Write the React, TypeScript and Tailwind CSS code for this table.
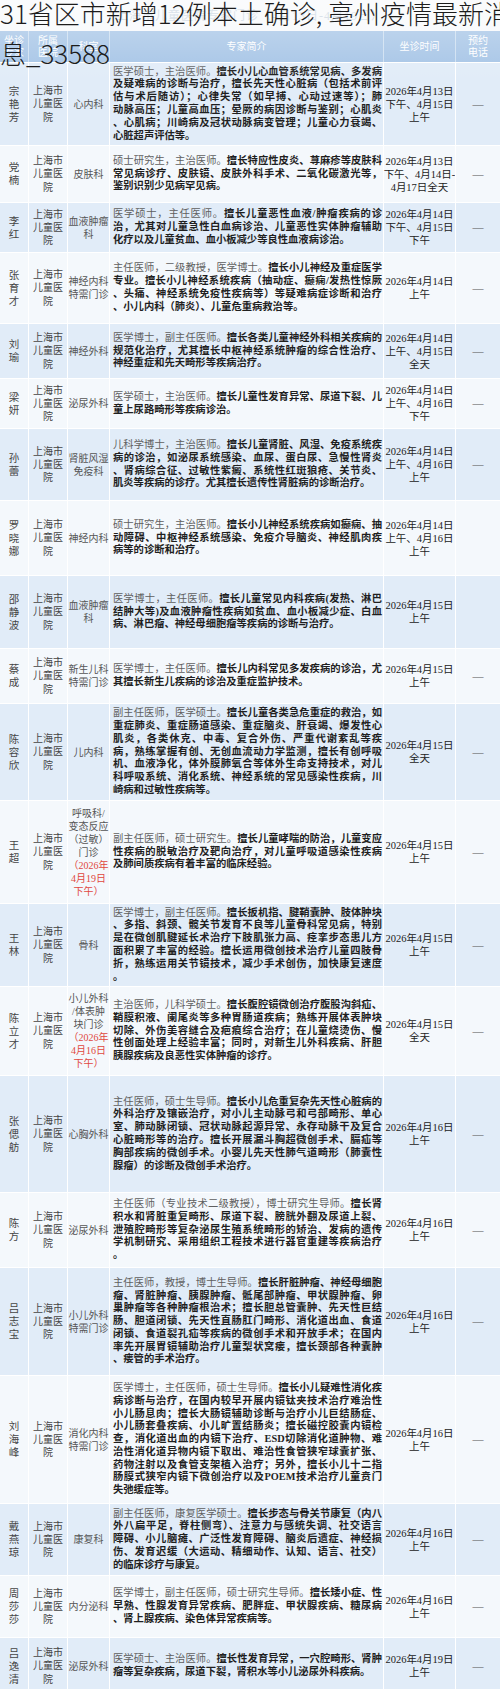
import React from 'react';

type Row = {
  name: string;
  dept: string[];
  red?: string[];
  intro: string[];
  plain: number;
  time: string[];
  phone: boolean;
  h: number;
};

const rows: Row[] = [
  {
    name: '宗艳芳',
    dept: ['心内科'],
    plain: 10,
    intro: [
      '医学硕士，主治医师。擅长小儿心血管系统常见病、多发病',
      '及疑难病的诊断与治疗，擅长先天性心脏病（包括术前评',
      '估与术后随访）；心律失常（如早搏、心动过速等）；肺',
      '动脉高压；儿童高血压；晕厥的病因诊断与鉴别；心肌炎',
      '、心肌病；川崎病及冠状动脉病变管理；儿童心力衰竭、',
      '心脏超声评估等。',
    ],
    time: ['2026年4月13日', '下午、4月15日', '上午'],
    phone: true,
    h: 83,
  },
  {
    name: '党楠',
    dept: ['皮肤科'],
    plain: 11,
    intro: [
      '硕士研究生，主治医师。擅长特应性皮炎、荨麻疹等皮肤科',
      '常见病诊疗、皮肤镜、皮肤外科手术、二氧化碳激光等，',
      '鉴别识别少见病罕见病。',
    ],
    time: ['2026年4月13日', '下午、4月14日-', '4月17日全天'],
    phone: true,
    h: 57,
  },
  {
    name: '李红',
    dept: ['血液肿瘤', '科'],
    plain: 10,
    intro: [
      '医学硕士，主任医师。擅长儿童恶性血液/肿瘤疾病的诊',
      '治，尤其对儿童急性白血病诊治、儿童恶性实体肿瘤辅助',
      '化疗以及儿童贫血、血小板减少等良性血液病诊治。',
    ],
    time: ['2026年4月14日', '下午、4月15日', '下午'],
    phone: true,
    h: 50,
  },
  {
    name: '张育才',
    dept: ['神经内科', '特需门诊'],
    plain: 15,
    intro: [
      '主任医师，二级教授，医学博士。擅长小儿神经及重症医学',
      '专业。擅长小儿神经系统疾病（抽动症、癫痫/发热性惊厥',
      '、头痛、神经系统免疫性疾病等）等疑难病症诊断和治疗',
      '、小儿内科（肺炎）、儿童危重病救治等。',
    ],
    time: ['2026年4月14日', '上午'],
    phone: true,
    h: 71,
  },
  {
    name: '刘瑜',
    dept: ['神经外科'],
    plain: 11,
    intro: [
      '医学博士，副主任医师。擅长各类儿童神经外科相关疾病的',
      '规范化治疗，尤其擅长中枢神经系统肿瘤的综合性治疗、',
      '神经重症和先天畸形等疾病治疗。',
    ],
    time: ['2026年4月14日', '上午、4月15日', '全天'],
    phone: true,
    h: 55,
  },
  {
    name: '梁妍',
    dept: ['泌尿外科'],
    plain: 10,
    intro: [
      '医学硕士，主治医师。擅长儿童性发育异常、尿道下裂、儿',
      '童上尿路畸形等疾病诊治。',
    ],
    time: ['2026年4月14日', '上午、4月16日', '下午'],
    phone: true,
    h: 50,
  },
  {
    name: '孙蕾',
    dept: ['肾脏风湿', '免疫科'],
    plain: 11,
    intro: [
      '儿科学博士，主治医师。擅长儿童肾脏、风湿、免疫系统疾',
      '病的诊治，如泌尿系统感染、血尿、蛋白尿、急慢性肾炎',
      '、肾病综合征、过敏性紫癜、系统性红斑狼疮、关节炎、',
      '肌炎等疾病的诊疗。尤其擅长遗传性肾脏病的诊断治疗。',
    ],
    time: ['2026年4月14日', '上午、4月16日', '上午'],
    phone: true,
    h: 72,
  },
  {
    name: '罗晓娜',
    dept: ['神经内科'],
    plain: 11,
    intro: [
      '硕士研究生，主治医师。擅长小儿神经系统疾病如癫痫、抽',
      '动障碍、中枢神经系统感染、免疫介导脑炎、神经肌肉疾',
      '病等的诊断和治疗。',
    ],
    time: ['2026年4月14日', '上午、4月16日', '上午'],
    phone: false,
    h: 75,
  },
  {
    name: '邵静波',
    dept: ['血液肿瘤', '科'],
    plain: 10,
    intro: [
      '医学博士，主任医师。擅长儿童常见内科疾病(发热、淋巴',
      '结肿大等)及血液肿瘤性疾病如贫血、血小板减少症、白血',
      '病、淋巴瘤、神经母细胞瘤等疾病的诊断与治疗。',
    ],
    time: ['2026年4月15日', '上午'],
    phone: false,
    h: 73,
  },
  {
    name: '蔡成',
    dept: ['新生儿科', '特需门诊'],
    plain: 10,
    intro: [
      '医学博士，主任医师。擅长儿内科常见多发疾病的诊治，尤',
      '其擅长新生儿疾病的诊治及重症监护技术。',
    ],
    time: ['2026年4月15日', '上午'],
    phone: true,
    h: 55,
  },
  {
    name: '陈容欣',
    dept: ['儿内科'],
    plain: 11,
    intro: [
      '副主任医师，医学硕士。擅长儿童各类急危重症的救治，如',
      '重症肺炎、重症肠道感染、重症脑炎、肝衰竭、爆发性心',
      '肌炎，各类休克、中毒、复合外伤、严重代谢紊乱等疾',
      '病，熟练掌握有创、无创血流动力学监测，擅长有创呼吸',
      '机、血液净化，体外膜肺氧合等体外生命支持技术，对儿',
      '科呼吸系统、消化系统、神经系统的常见感染性疾病，川',
      '崎病和过敏性疾病等。',
    ],
    time: ['2026年4月15日', '全天'],
    phone: true,
    h: 97,
  },
  {
    name: '王超',
    dept: ['呼吸科/', '变态反应', '（过敏）', '门诊'],
    red: ['（2026年', '4月19日', '下午）'],
    plain: 12,
    intro: [
      '副主任医师，硕士研究生。擅长儿童哮喘的防治，儿童变应',
      '性疾病的脱敏治疗及靶向治疗，对儿童呼吸道感染性疾病',
      '及肺间质疾病有着丰富的临床经验。',
    ],
    time: ['2026年4月15日', '上午'],
    phone: true,
    h: 103,
  },
  {
    name: '王林',
    dept: ['骨科'],
    plain: 11,
    intro: [
      '医学博士，副主任医师。擅长扳机指、腱鞘囊肿、肢体肿块',
      '、多指、斜颈、髋关节发育不良等儿童骨科常见病，特别',
      '是在微创肌腱延长术治疗下肢肌张力高、痉挛步态患儿方',
      '面积累了丰富的经验。擅长运用微创技术治疗儿童四肢骨',
      '折，熟练运用关节镜技术，减少手术创伤，加快康复速度',
      '。',
    ],
    time: ['2026年4月15日', '上午'],
    phone: true,
    h: 83,
  },
  {
    name: '陈立才',
    dept: ['小儿外科', '/体表肿', '块门诊'],
    red: ['（2026年', '4月16日', '下午）'],
    plain: 11,
    intro: [
      '主治医师，儿科学硕士。擅长腹腔镜微创治疗腹股沟斜疝、',
      '鞘膜积液、阑尾炎等多种胃肠道疾病；熟练开展体表肿块',
      '切除、外伤美容缝合及疤痕综合治疗；在儿童烧烫伤、慢',
      '性创面处理上经验丰富；同时，对新生儿外科疾病、肝胆',
      '胰腺疾病及良恶性实体肿瘤的诊疗。',
    ],
    time: ['2026年4月15日', '全天'],
    phone: true,
    h: 89,
  },
  {
    name: '张偲舫',
    dept: ['心胸外科'],
    plain: 11,
    intro: [
      '主任医师，硕士生导师。擅长小儿危重复杂先天性心脏病的',
      '外科治疗及镶嵌治疗，对小儿主动脉弓和弓部畸形、单心',
      '室、肺动脉闭锁、冠状动脉起源异常、永存动脉干及复合',
      '心脏畸形等的治疗。擅长开展漏斗胸超微创手术、膈疝等',
      '胸部疾病的微创手术。小婴儿先天性肺气道畸形（肺囊性',
      '腺瘤）的诊断及微创手术治疗。',
    ],
    time: ['2026年4月16日', '上午'],
    phone: true,
    h: 117,
  },
  {
    name: '陈方',
    dept: ['泌尿外科'],
    plain: 23,
    intro: [
      '主任医师（专业技术二级教授），博士研究生导师。擅长肾',
      '积水和肾脏重复畸形、尿道下裂、膀胱外翻及尿道上裂、',
      '泄殖腔畸形等复杂泌尿生殖系统畸形的矫治、发病的遗传',
      '学机制研究、采用组织工程技术进行器官重建等疾病治疗',
      '。',
    ],
    time: ['2026年4月16日', '上午'],
    phone: true,
    h: 75,
  },
  {
    name: '吕志宝',
    dept: ['小儿外科', '特需门诊'],
    plain: 14,
    intro: [
      '主任医师，教授，博士生导师。擅长肝脏肿瘤、神经母细胞',
      '瘤、肾脏肿瘤、胰腺肿瘤、骶尾部肿瘤、甲状腺肿瘤、卵',
      '巢肿瘤等各种肿瘤根治术；擅长胆总管囊肿、先天性巨结',
      '肠、胆道闭锁、先天性直肠肛门畸形、消化道出血、食道',
      '闭锁、食道裂孔疝等疾病的微创手术和开放手术；在国内',
      '率先开展胃镜辅助治疗儿童梨状窝瘘，擅长颈部各种囊肿',
      '、瘘管的手术治疗。',
    ],
    time: ['2026年4月16日', '上午'],
    phone: true,
    h: 108,
  },
  {
    name: '刘海峰',
    dept: ['消化内科', '特需门诊'],
    plain: 16,
    intro: [
      '医学博士，主任医师，硕士生导师。擅长小儿疑难性消化疾',
      '病诊断与治疗，在国内较早开展内镜钛夹技术治疗难治性',
      '小儿肠息肉；擅长大肠镜辅助诊断与治疗小儿巨结肠症、',
      '小儿肠套叠疾病、小儿旷置结肠炎；擅长磁控胶囊内镜检',
      '查，消化道出血的内镜下治疗、ESD切除消化道肿物、难',
      '治性消化道异物内镜下取出、难治性食管狭窄球囊扩张、',
      '药物注射以及食管支架植入治疗；另外，擅长小儿十二指',
      '肠膜式狭窄内镜下微创治疗以及POEM技术治疗儿童贲门',
      '失弛缓症等。',
    ],
    time: ['2026年4月16日', '上午'],
    phone: true,
    h: 128,
  },
  {
    name: '戴燕琼',
    dept: ['康复科'],
    plain: 13,
    intro: [
      '副主任医师，康复医学硕士。擅长步态与骨关节康复（内八',
      '外八扁平足，脊柱侧弯）、注意力与感统失调、社交语言',
      '障碍、小儿脑瘫、广泛性发育障碍、脑炎后遗症、神经损',
      '伤、发育迟缓（大运动、精细动作、认知、语言、社交）',
      '的临床诊疗与康复。',
    ],
    time: ['2026年4月16日', '上午'],
    phone: true,
    h: 72,
  },
  {
    name: '周莎莎',
    dept: ['内分泌科'],
    plain: 19,
    intro: [
      '医学博士，副主任医师，硕士研究生导师。擅长矮小症、性',
      '早熟、性腺发育异常疾病、肥胖症、甲状腺疾病、糖尿病',
      '、肾上腺疾病、染色体异常疾病等。',
    ],
    time: ['2026年4月16日', '上午'],
    phone: true,
    h: 62,
  },
  {
    name: '吕逸清',
    dept: ['泌尿外科'],
    plain: 10,
    intro: [
      '医学硕士、主治医师。擅长性发育异常，一穴腔畸形、肾肿',
      '瘤等复杂疾病，尿道下裂，肾积水等小儿泌尿外科疾病。',
    ],
    time: ['2026年4月19日', '上午'],
    phone: true,
    h: 57,
  },
];

function Intro({ lines, plain }: { lines: string[]; plain: number }) {
  let pos = 0;
  return (
    <div className="w-full">
      {lines.map((line, i) => {
        const start = pos;
        pos += line.length;
        const cut = Math.max(0, Math.min(line.length, plain - start));
        const last = i === lines.length - 1;
        return (
          <div
            key={i}
            className={
              last
                ? 'whitespace-nowrap text-left'
                : 'whitespace-nowrap text-justify [text-align-last:justify]'
            }
          >
            {cut > 0 && <span className="font-normal text-[#5f5f5f]">{line.slice(0, cut)}</span>}
            {cut < line.length && <span className="font-bold text-[#1f1f1f]">{line.slice(cut)}</span>}
          </div>
        );
      })}
    </div>
  );
}

function Stack({ items, className }: { items: string[]; className?: string }) {
  return (
    <div className={className}>
      {items.map((t, i) => (
        <div key={i} className="whitespace-nowrap">
          {t}
        </div>
      ))}
    </div>
  );
}

export default function App() {
  return (
    <div className="relative w-[500px] h-[1689px] overflow-hidden bg-[#f4f8fc] font-['Liberation_Serif','Noto_Sans_CJK_SC',serif]">
      {/* faded page title of the table picture */}
      <div className="h-[31px] flex items-center justify-center bg-[#f7f9fb] text-[12px] text-[#c9d5e1] tracking-[1px]">
        上海市儿童医院专家门诊（4月13日-4月19日）
      </div>

      {/* Header */}
      <div className="flex h-[31px] bg-[#a5c4e6] text-white text-[10px] leading-[12px] text-center">
        <div className="w-[28px] flex items-center justify-center">坐诊<br />专家</div>
        <div className="w-[39px] border-l border-[#cddff1] flex items-center justify-center">所属<br />医院</div>
        <div className="w-[42px] border-l border-[#cddff1] flex items-center justify-center">科室</div>
        <div className="w-[274px] border-l border-[#cddff1] flex items-center justify-center">专家简介</div>
        <div className="w-[72px] border-l border-[#cddff1] flex items-center justify-center">坐诊时间</div>
        <div className="w-[45px] border-l border-[#cddff1] flex items-center justify-center">预约<br />电话</div>
      </div>

      {rows.map((r, i) => (
        <div
          key={r.name}
          style={{ height: r.h }}
          className={`flex border-t border-white ${i % 2 === 0 ? 'bg-[#e1ecf8]' : 'bg-[#f4f8fc]'}`}
        >
          <div className="w-[28px] flex items-center justify-center">
            <Stack items={r.name.split('')} className="text-[10.5px] leading-[13px] text-[#454545] text-center" />
          </div>
          <div className="w-[39px] border-l border-white flex items-center justify-center">
            <Stack items={['上海市', '儿童医', '院']} className="text-[10px] leading-[13.3px] text-[#454545] text-center" />
          </div>
          <div className="w-[42px] border-l border-white flex flex-col items-center justify-center text-[10px] leading-[13px] text-center">
            <Stack items={r.dept} className="text-[#555]" />
            {r.red && <Stack items={r.red} className="text-[#e0473e]" />}
          </div>
          <div className="w-[274px] border-l border-white flex items-center pl-[3px] pr-[1px] text-[10.3px] leading-[12.8px]">
            <Intro lines={r.intro} plain={r.plain} />
          </div>
          <div className="w-[72px] border-l border-white flex items-center justify-center">
            <Stack items={r.time} className="text-[10.5px] leading-[13px] text-[#222] text-center" />
          </div>
          <div className="w-[45px] border-l border-white flex items-center justify-center text-[11px] text-[#555]">
            {r.phone ? '—' : ''}
          </div>
        </div>
      ))}

      {/* whitish fade over the top of the table picture */}
      <div className="absolute left-0 top-0 w-[500px] h-[80px] bg-gradient-to-b from-white/40 to-white/0 pointer-events-none" />

      {/* page heading laid over the picture */}
      <div className="absolute left-0 top-[-7px] w-[520px] break-all text-[26px] leading-[40px] font-light text-[#1c1c1c] font-['Noto_Sans_CJK_SC','Noto_Sans',sans-serif]">
        31省区市新增12例本土确诊, 亳州疫情最新消息_33588
      </div>
    </div>
  );
}
